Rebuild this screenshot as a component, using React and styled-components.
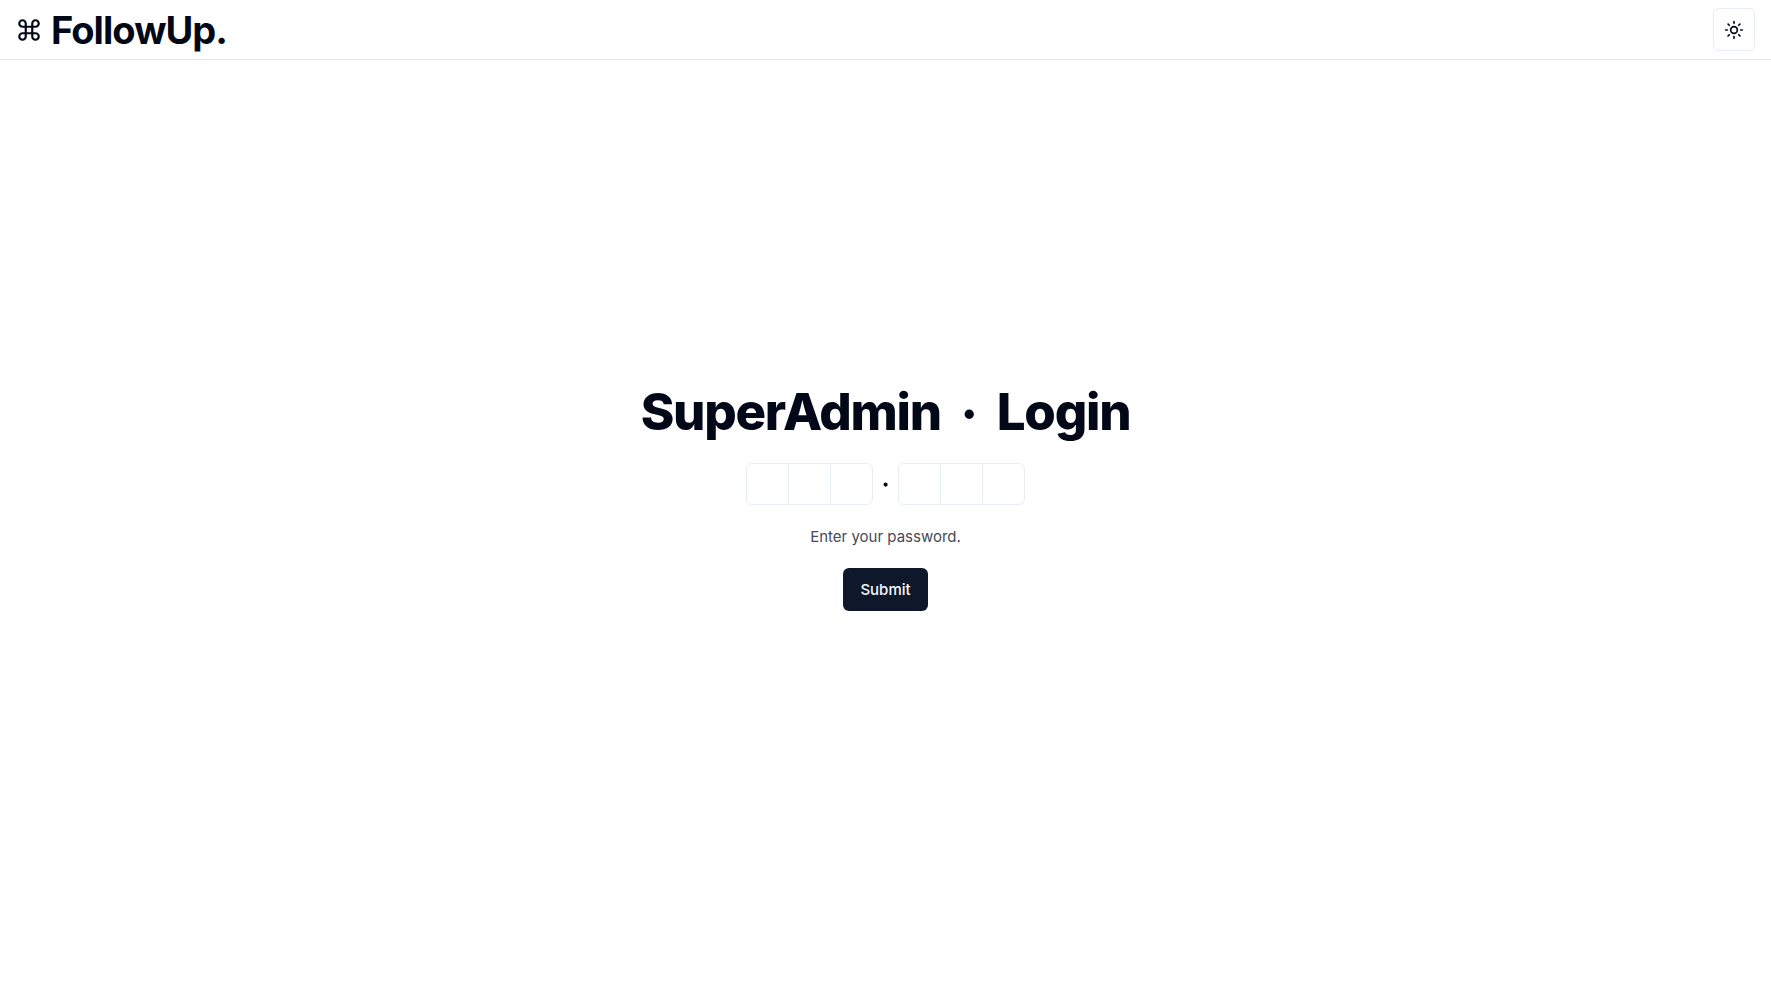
import React, { useState } from "react";
import styled, { createGlobalStyle } from "styled-components";
import { Command, Sun, Dot } from "lucide-react";

const GlobalStyle = createGlobalStyle`
  *, *::before, *::after { box-sizing: border-box; }
  body {
    margin: 0;
    background: #ffffff;
    color: #020817;
    font-family: Inter, "Liberation Sans", sans-serif;
    font-size: 16px;
    line-height: 24px;
  }
`;

const Page = styled.div`
  display: flex;
  flex-direction: column;
  min-height: 100vh;
`;

const Header = styled.header`
  display: flex;
  align-items: center;
  justify-content: space-between;
  padding: 8px 16px;
  border-bottom: 1px solid #e2e8f0;
`;

const Brand = styled.a`
  display: flex;
  align-items: center;
  gap: 9px;
  color: inherit;
  text-decoration: none;
  font-size: 38px;
  line-height: 40px;
  font-weight: 700;
  letter-spacing: -0.025em;
`;

const IconButton = styled.button`
  display: flex;
  align-items: center;
  justify-content: center;
  width: 42px;
  height: 43px;
  padding: 0;
  border: 1px solid #e8edf3;
  border-radius: 6px;
  background: #ffffff;
  color: inherit;
  cursor: pointer;
`;

const Main = styled.main`
  flex: 1;
  display: flex;
  flex-direction: column;
  align-items: center;
  justify-content: center;
  gap: 21px;
  padding-bottom: 58px;
`;

const Title = styled.h1`
  display: flex;
  align-items: flex-start;
  margin: 0;
  font-size: 51px;
  line-height: 51px;
  font-weight: 800;
  letter-spacing: -0.025em;
`;

const Form = styled.form`
  display: flex;
  flex-direction: column;
  align-items: center;
  gap: 21px;
`;

const Code = styled.div`
  display: flex;
  align-items: center;
`;

const Group = styled.div`
  display: flex;
`;

const Slot = styled.input`
  width: 42px;
  height: 42px;
  padding: 0;
  border: 1px solid #e8edf3;
  border-left-width: 0;
  border-radius: 0;
  background: transparent;
  color: inherit;
  font: inherit;
  font-size: 15px;
  text-align: center;

  &:first-child { width: 43px; border-left-width: 1px; border-radius: 6px 0 0 6px; }
  &:last-child { border-radius: 0 6px 6px 0; }
`;

const Hint = styled.p`
  margin: 0;
  font-size: 15px;
  line-height: 21px;
  color: #454b58;
`;

const Submit = styled.button`
  height: 43px;
  padding: 0 17px;
  border: 0;
  border-radius: 6px;
  background: #0f172a;
  color: #f8fafc;
  font: inherit;
  font-size: 15px;
  font-weight: 500;
  cursor: pointer;
`;

export default function App() {
  const [code, setCode] = useState(["", "", "", "", "", ""]);
  const slot = (i) => (
    <Slot
      key={i}
      maxLength={1}
      inputMode="numeric"
      aria-label={`Password character ${i + 1}`}
      aria-describedby="password-hint"
      value={code[i]}
      onChange={(e) => setCode(code.map((c, n) => (n === i ? e.target.value : c)))}
    />
  );

  return (
    <Page>
      <GlobalStyle />
      <Header>
        <Brand href="#">
          <Command size={26} />
          FollowUp.
        </Brand>
        <IconButton type="button" aria-label="Toggle theme">
          <Sun size={20} />
        </IconButton>
      </Header>
      <Main>
        <Title>
          SuperAdmin <Dot size={56} /> Login
        </Title>
        <Form onSubmit={(e) => e.preventDefault()}>
          <Code>
            <Group>{[0, 1, 2].map(slot)}</Group>
            <Dot size={25} />
            <Group>{[3, 4, 5].map(slot)}</Group>
          </Code>
          <Hint id="password-hint">Enter your password.</Hint>
          <Submit type="submit">Submit</Submit>
        </Form>
      </Main>
    </Page>
  );
}
